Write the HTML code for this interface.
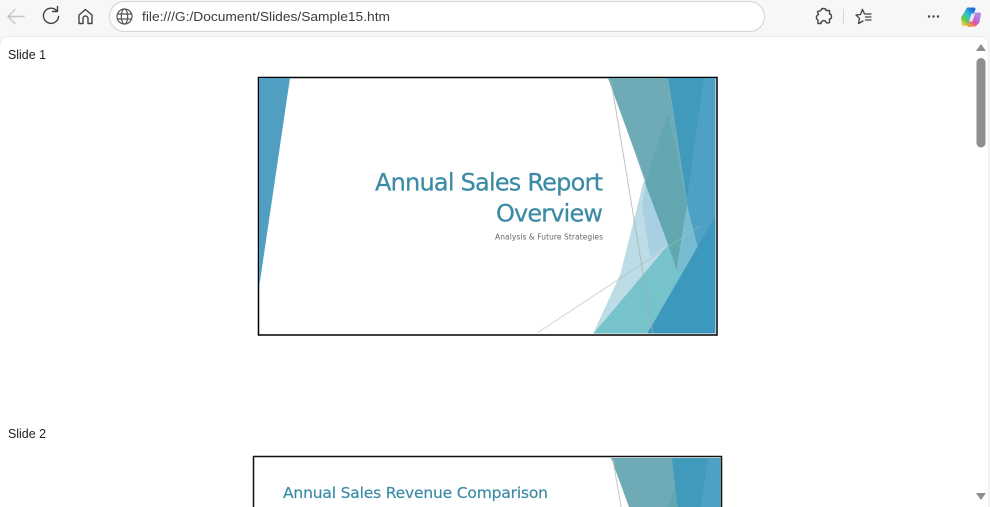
<!DOCTYPE html>
<html><head><meta charset="utf-8"><title>Sample15</title>
<style>
html,body{margin:0;padding:0;width:990px;height:507px;overflow:hidden;background:#f7f7f7}
svg{position:absolute;left:0;top:0;display:block}
</style></head>
<body>
<svg width="990" height="507" viewBox="0 0 990 507" xmlns="http://www.w3.org/2000/svg">
<defs>
<clipPath id="cp"><rect x="259" y="78" width="456.500" height="255.500"/></clipPath>
<clipPath id="s2"><rect x="254" y="458" width="466.500" height="49"/></clipPath>
<linearGradient id="cL" x1="0.8" y1="0" x2="0.1" y2="1"><stop offset="0" stop-color="#1f6fd8"/><stop offset="0.4" stop-color="#2cc0d0"/><stop offset="0.75" stop-color="#62cc52"/><stop offset="1" stop-color="#f2c83a"/></linearGradient>
<linearGradient id="cR" x1="0.8" y1="0" x2="0.2" y2="1"><stop offset="0" stop-color="#b48ae8"/><stop offset="0.55" stop-color="#c45fc8"/><stop offset="0.8" stop-color="#f0607a"/><stop offset="1" stop-color="#f49a45"/></linearGradient>
</defs>

<!-- page -->
<path d="M0 46 Q0 36.500 9 36.500 H979 Q988.500 36.500 988.500 46 V507 H0Z" fill="#fff"/>
<path d="M0 46 Q0 36.500 9 36.500 H979 Q988.500 36.500 988.500 46 V507" fill="none" stroke="#ececec"/>

<!-- toolbar -->
<g fill="none" stroke-linecap="round" stroke-linejoin="round">
  <path d="M8 16.500H24M8 16.500L15 9.500M8 16.500L15 23.500" stroke="#c4c4c4" stroke-width="1.400"/>
  <path d="M56.500 10.500A7.600 7.600 0 1 0 58.600 16.500M57.500 6.500V11.500H52.500" stroke="#444" stroke-width="1.400"/>
  <path d="M79 15L85.500 9.500L92 15V23.500H88V18.500A2.500 2.500 0 0 0 83 18.500V23.500H79Z" stroke="#444" stroke-width="1.400"/>
</g>
<rect x="109.500" y="1.500" width="655" height="30" rx="15" fill="#fff" stroke="#d3d3d3"/>
<g fill="none" stroke="#555" stroke-width="1.200">
  <circle cx="124.500" cy="16.500" r="7.500"/>
  <ellipse cx="124.500" cy="16.500" rx="3.200" ry="7.500"/>
  <path d="M117.500 14H131.500M117.500 19H131.500"/>
</g>
<text x="142" y="21" font-family="'Liberation Sans',sans-serif" font-size="13" fill="#3c3c3c" textLength="248" lengthAdjust="spacingAndGlyphs">file:///G:/Document/Slides/Sample15.htm</text>

<path d="M821 10.500Q821 8.500 823.500 8.500Q826 8.500 826 10.500H829.500V14Q831.500 14 831.500 16.500Q831.500 19 829.500 19V22.500Q827 23.800 826 22Q825 20 823 20.800Q821 21.500 821 23.500H818V20Q816 19 816.500 16.800Q817 15 818.500 14.500L817.500 11.500Z" fill="none" stroke="#444" stroke-width="1.400" stroke-linejoin="round"/>
<line x1="843.500" y1="9" x2="843.500" y2="24" stroke="#d6d6d6"/>
<path d="M862.500 9.500L860.500 14.500L856 15L859.500 18.300L858.500 23.500L863 21" fill="none" stroke="#444" stroke-width="1.300" stroke-linejoin="round" stroke-linecap="round"/>
<path d="M862.500 9.500L864.500 14H871M865.500 17H871M865.500 20H871" fill="none" stroke="#444" stroke-width="1.300" stroke-linecap="round" stroke-linejoin="round"/>
<g fill="#444"><circle cx="929" cy="16.500" r="1.200"/><circle cx="933.500" cy="16.500" r="1.200"/><circle cx="938" cy="16.500" r="1.200"/></g>

<!-- copilot -->
<polygon points="968,9 974,9 968,24 963.500,24.500 962.500,18" fill="url(#cL)" stroke="url(#cL)" stroke-width="3" stroke-linejoin="round"/>
<polygon points="975,14 979.500,14 978,22 975,25 969,25.500" fill="url(#cR)" stroke="url(#cR)" stroke-width="3" stroke-linejoin="round"/>
<polygon points="971.500,13.500 975,13.500 972.500,21.500 969,21.500" fill="#fff" opacity=".8"/>

<!-- labels -->
<text x="8" y="59" font-family="'Liberation Sans',sans-serif" font-size="13" fill="#222" textLength="38" lengthAdjust="spacingAndGlyphs">Slide 1</text>
<text x="8" y="438" font-family="'Liberation Sans',sans-serif" font-size="13" fill="#222" textLength="38" lengthAdjust="spacingAndGlyphs">Slide 2</text>

<!-- slide 1 -->
<rect x="258.500" y="77.500" width="458.500" height="257.500" fill="#fff" stroke="#000" stroke-width="1.500"/>
<g clip-path="url(#cp)">
  <polygon points="259,78 290,78 259,288" fill="#509fc2"/>
  <polygon points="627,128 644,180 620,275 593,334 668,245 677,268" fill="#bcdde6"/>
  <polygon points="646,185 677,268 668,245 650,257 642,205" fill="#a9d0e2"/>
  <polygon points="593,334 668,245 677,268 684,272 648,334" fill="#76c3cb"/>
  <polygon points="668,78 716,78 716,218 697,248 687,205" fill="#4ea1c4"/>
  <polygon points="687,205 698,248 684,273 677,270" fill="#78bcd2"/>
  <polygon points="668,78 704,78 687,198" fill="#419abb"/>
  <polygon points="608,78 668,78 687,205 677,268" fill="#6eabb6"/>
  <polygon points="668,113 687,205 677,268 645,183" fill="#62a7b0"/>
  <polygon points="668,245 682,235 677,270" fill="#5ea9ae"/>
  <polygon points="647,334 716,215 716,334" fill="#3d98be"/>
  <line x1="611" y1="80" x2="653" y2="334" stroke="#a9aeb0" stroke-opacity=".75" stroke-width="1"/>
  <line x1="537" y1="333" x2="700" y2="226" stroke="#aeb8ba" stroke-opacity=".6" stroke-width="1"/>
</g>
<g font-family="'DejaVu Sans',sans-serif" text-anchor="end">
<text x="603" y="190.500" font-size="24" fill="#3b8ba6" stroke="#3b8ba6" stroke-width=".25" textLength="228" lengthAdjust="spacing">Annual Sales Report</text>
<text x="603" y="221.500" font-size="24" fill="#3b8ba6" stroke="#3b8ba6" stroke-width=".25" textLength="107" lengthAdjust="spacing">Overview</text>
<text x="603" y="239.500" font-size="7.500" fill="#666" textLength="108" lengthAdjust="spacing">Analysis &amp; Future Strategies</text>
</g>

<!-- slide 2 -->
<path d="M253.500 507V456.500H721.500V507" fill="#fff" stroke="#111" stroke-width="1.500"/>
<g clip-path="url(#s2)">
  <polygon points="611,458 672,458 680,507 629,507" fill="#6eabb6"/>
  <polygon points="672,458 721,458 721,507 677,507" fill="#4ea1c4"/>
  <polygon points="672,458 708,458 701,507 678,507" fill="#419abb"/>
  <polygon points="668,507 674,490 678,507" fill="#62a7b0"/>
  <line x1="613" y1="460" x2="621" y2="507" stroke="#c4c7c8"/>
</g>
<text x="283" y="498" font-family="'DejaVu Sans',sans-serif" font-size="15.500" fill="#3b8ba6" stroke="#3b8ba6" stroke-width=".2" textLength="265" lengthAdjust="spacing">Annual Sales Revenue Comparison</text>

<!-- scrollbar -->
<polygon points="981,44 986,51 976,51" fill="#8e8e8e"/>
<rect x="976.500" y="58" width="9" height="89.500" rx="4.500" fill="#8f8f8f"/>
<polygon points="976,493 986,493 981,500" fill="#8e8e8e"/>
</svg>
</body></html>
